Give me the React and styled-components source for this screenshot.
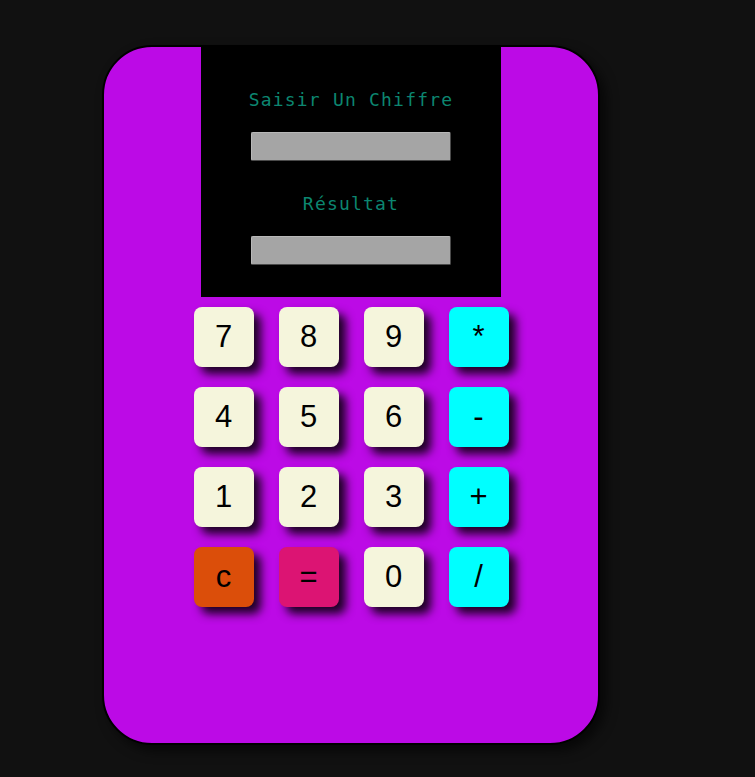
import React from "react";
import styled, { createGlobalStyle } from "styled-components";

const Global = createGlobalStyle`
  html, body { margin: 0; padding: 0; background: #111111; }
  body { font-family: "Liberation Sans", Arial, sans-serif; }
`;

const Page = styled.div`
  padding: 45px 0 0 102px;
  min-height: 777px;
  box-sizing: border-box;
`;

const Calculator = styled.div`
  width: 498px;
  height: 700px;
  box-sizing: border-box;
  background: #bc0ae6;
  border: 2px solid #000;
  border-radius: 50px;
  box-shadow: 6px 6px 12px rgba(0, 0, 0, 0.6);
  display: flex;
  flex-direction: column;
  align-items: center;
`;

const Screen = styled.div`
  width: 300px;
  height: 252px;
  margin-top: -2px;
  background: #000;
  display: flex;
  flex-direction: column;
  align-items: center;
  padding-top: 44px;
  box-sizing: border-box;
`;

const Label = styled.div`
  font-family: "DejaVu Sans Mono", "Liberation Mono", monospace;
  font-size: 18px;
  letter-spacing: 1.2px;
  line-height: 22px;
  color: #0c8670;
  margin-top: ${(p) => p.$top || 0}px;
`;

const Field = styled.input`
  width: 200px;
  height: 29px;
  box-sizing: border-box;
  margin-top: 21px;
  background: #a5a5a5;
  border: 1px solid;
  border-color: #b8b8b8 #4a4a4a #4a4a4a #b8b8b8;
  border-radius: 2px;
  outline: none;
`;

const Keypad = styled.div`
  margin-top: 10px;
  display: grid;
  grid-template-columns: repeat(4, 60px);
  grid-auto-rows: 60px;
  column-gap: 25px;
  row-gap: 20px;
`;

const colors = {
  num: "#f5f5dc",
  op: "#00ffff",
  clear: "#db4e0a",
  eq: "#dc1473",
};

const Key = styled.button`
  width: 60px;
  height: 60px;
  border: none;
  border-radius: 8px;
  background: ${(p) => colors[p.$kind]};
  color: #000;
  font-family: "Liberation Sans", Arial, sans-serif;
  font-size: 31px;
  padding: 0;
  box-shadow: 7px 7px 10px rgba(0, 0, 0, 0.85);
  cursor: pointer;
  display: flex;
  align-items: center;
  justify-content: center;
`;

const keys = [
  ["7", "num"], ["8", "num"], ["9", "num"], ["*", "op"],
  ["4", "num"], ["5", "num"], ["6", "num"], ["-", "op"],
  ["1", "num"], ["2", "num"], ["3", "num"], ["+", "op"],
  ["c", "clear"], ["=", "eq"], ["0", "num"], ["/", "op"],
];

export default function App() {
  return (
    <>
      <Global />
      <Page>
        <Calculator>
          <Screen>
            <Label>Saisir Un Chiffre</Label>
            <Field type="text" />
            <Label $top={32}>Résultat</Label>
            <Field type="text" />
          </Screen>
          <Keypad>
            {keys.map(([k, kind]) => (
              <Key key={k} $kind={kind}>{k}</Key>
            ))}
          </Keypad>
        </Calculator>
      </Page>
    </>
  );
}
